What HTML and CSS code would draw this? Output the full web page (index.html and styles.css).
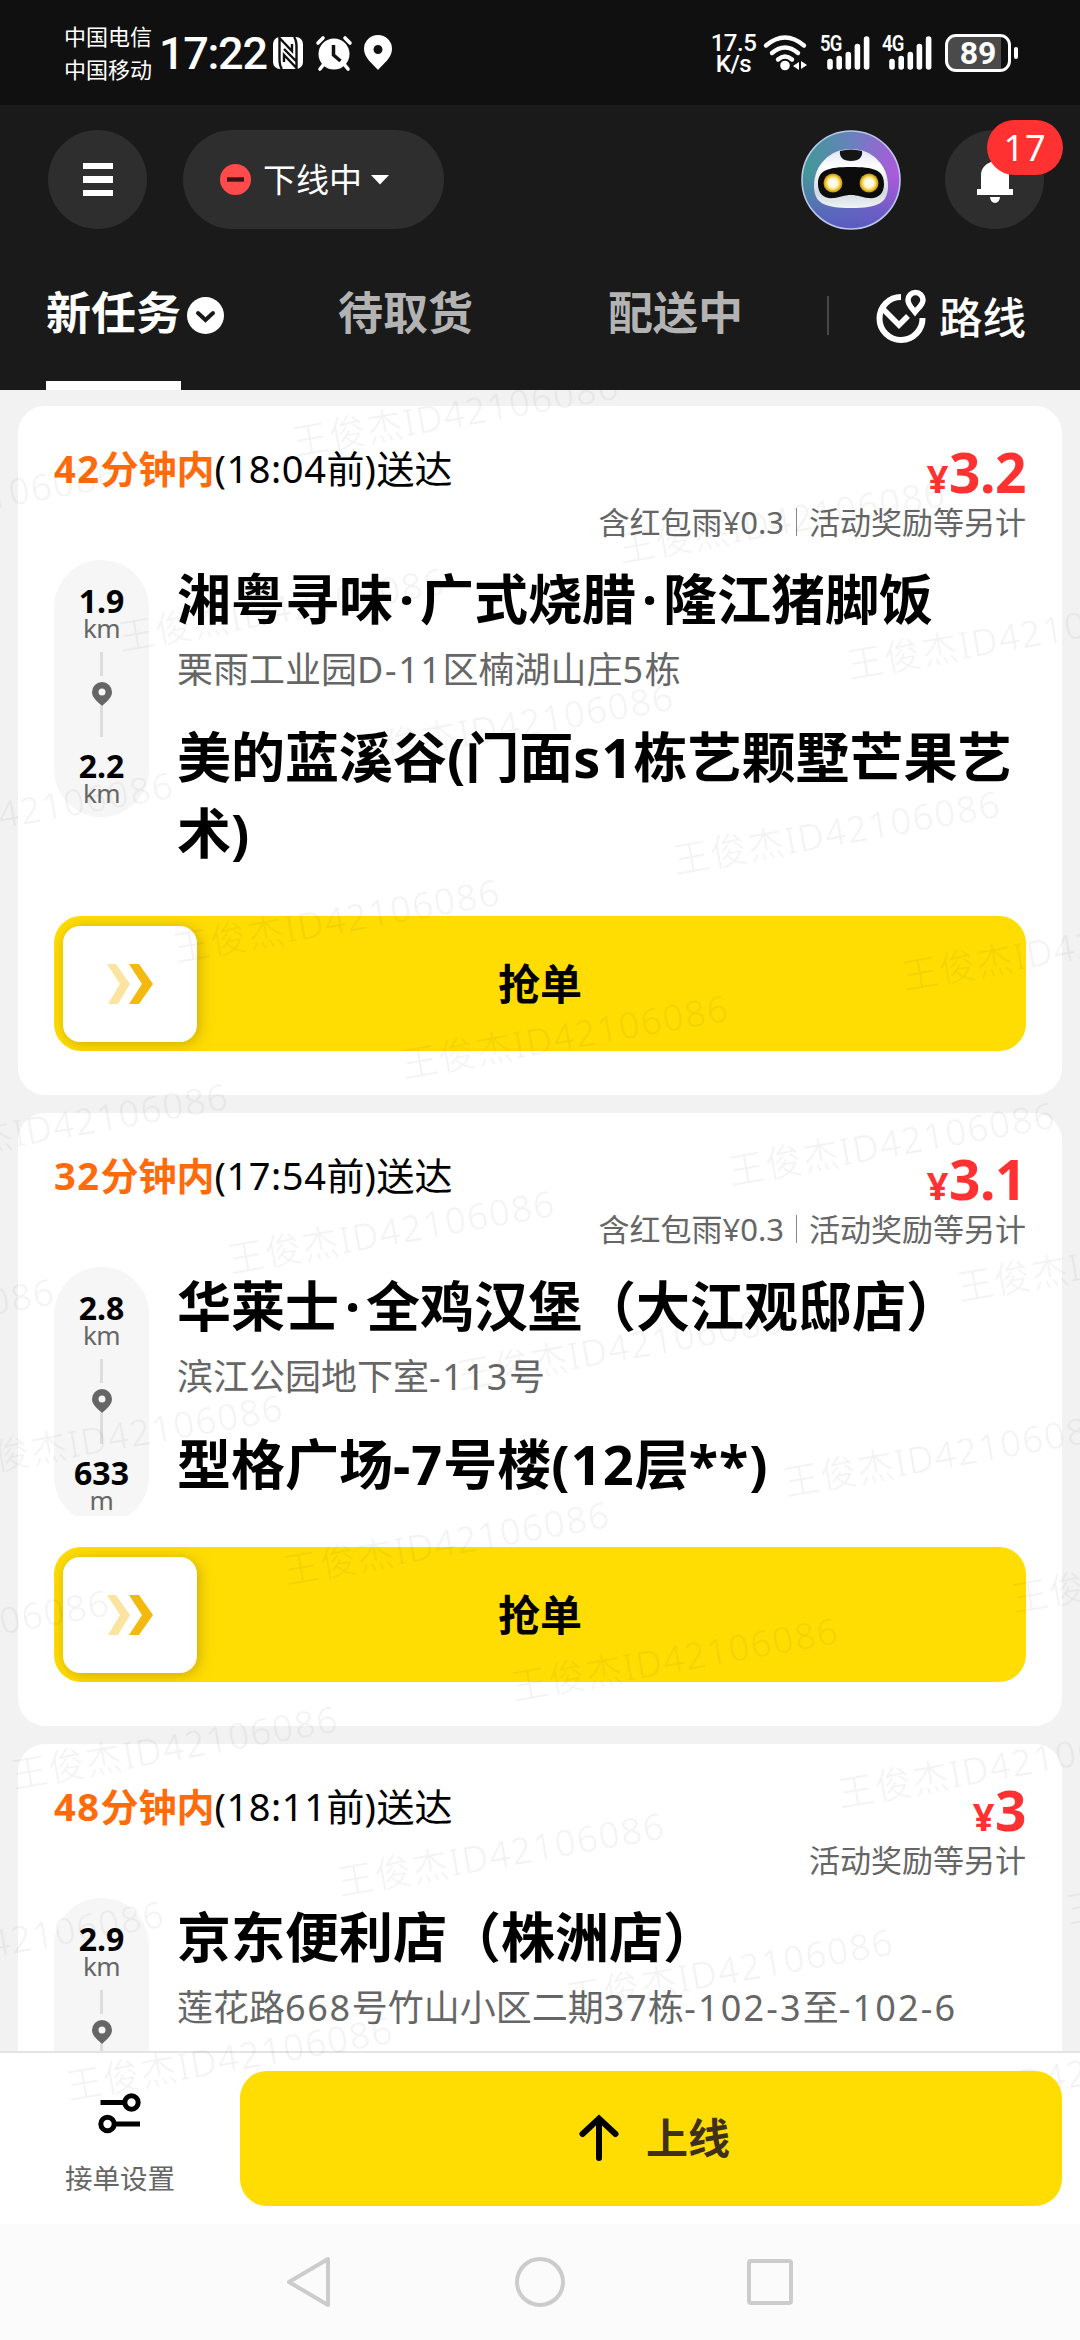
FILE: index.html
```html
<!DOCTYPE html>
<html lang="zh-CN">
<head>
<meta charset="utf-8">
<title>新任务</title>
<link rel="stylesheet" href="styles.css">
</head>
<body>
<svg class="defs" width="0" height="0">
  <symbol id="pin" viewBox="0 0 20 24"><path fill="#666" fill-rule="evenodd" d="M10 0a10 10 0 0 1 10 10c0 6-6 10-10 14C6 20 0 16 0 10A10 10 0 0 1 10 0Zm0 6.500a3.500 3.500 0 1 0 0 7 3.500 3.500 0 0 0 0-7Z"/></symbol>
  <symbol id="chevrons" viewBox="0 0 48 40"><path fill="#fbe3a0" d="M1 0h9l14 20-12 20H2l12-20Z"/><path fill="#f3b90f" d="M23 0h10l14 20-14 20H23l13-20Z"/></symbol>
  <symbol id="signal" viewBox="0 0 44 34"><g stroke="#fff" stroke-width="5.600" stroke-linecap="round"><path d="M3 25.500V31M12.200 22.500V31M21.300 18.500V31M30.400 10.500V31M39.600 3V31"/></g></symbol>
</svg>

<header class="status">
  <div class="carriers"><span>中国电信</span><span>中国移动</span></div>
  <div class="clock">17:22</div>
  <svg class="nfc" width="32" height="34" viewBox="0 0 32 34"><rect x="1" y="1" width="30" height="32" rx="7" fill="#fff"/><g stroke="#101010" stroke-width="2.400" fill="none"><path d="M7.500 1V23Q7.500 30 10 33M24.500 33V11Q24.500 4 22 1M7.500 2L20 15V8M24.500 32L12 19V26M12 13L24 25"/></g></svg>
  <svg class="alarm" width="38" height="36" viewBox="0 0 38 36"><circle cx="19" cy="19" r="15.500" fill="#fff"/><g stroke="#fff" stroke-width="3.600" stroke-linecap="round"><path d="M3 8l5-5M35 8l-5-5M9 29l-4 5M29 29l4 5"/></g><path d="M18.500 10v10l7 6" stroke="#101010" stroke-width="3.500" fill="none"/></svg>
  <svg class="loc" width="28" height="35" viewBox="0 0 28 35"><path fill="#fff" fill-rule="evenodd" d="M14 0a14 14 0 0 1 14 14c0 9-9 15-14 21C9 29 0 23 0 14A14 14 0 0 1 14 0Zm0 10a4.500 4.500 0 1 0 0 9 4.500 4.500 0 0 0 0-9Z"/></svg>
  <div class="status-right">
    <div class="speed"><span>17.5</span><span>K/s</span></div>
    <svg class="wifi" width="46" height="36" viewBox="0 0 46 36"><g fill="none" stroke="#fff" stroke-width="4.400" stroke-linecap="round"><path d="M3 10.500Q22 -5.500 41 10.500M9 18Q22 7 35 18M15 24.500Q22 18.500 29 24.500"/></g><circle cx="22" cy="30.500" r="4.800" fill="#fff"/><path d="M36 27v8l-6-4ZM38 26v8l6-4Z" fill="#fff"/></svg>
    <div class="cell"><span>5G</span><svg width="44" height="34"><use href="#signal"/></svg></div>
    <div class="cell cell-2"><span>4G</span><svg width="44" height="34"><use href="#signal"/></svg></div>
    <div class="battery"><span>89</span></div>
  </div>
</header>

<div class="top">
  <div class="tools">
    <div class="round"><div class="menu"><i></i><i></i><i></i></div></div>
    <div class="state">
      <svg width="31" height="31" viewBox="0 0 31 31"><circle cx="15.500" cy="15.500" r="15.500" fill="#ff4b4b"/><path d="M7 15.500h17" stroke="#3c1414" stroke-width="4.400"/></svg>
      <span>下线中</span>
      <svg width="18" height="10" viewBox="0 0 18 10"><path d="M0 0h18L9 9.500Z" fill="#fff"/></svg>
    </div>
    <svg class="robot" width="100" height="100" viewBox="0 0 100 100">
      <defs>
        <linearGradient id="ring" x1="0" y1=".45" x2="1" y2=".55"><stop offset="0" stop-color="#3f9a94"/><stop offset=".5" stop-color="#6c7fc0"/><stop offset="1" stop-color="#b455dc"/></linearGradient>
        <linearGradient id="low" x1="0" y1="0" x2="0" y2="1"><stop offset=".45" stop-color="#5a5ac0" stop-opacity="0"/><stop offset="1" stop-color="#5a5ac0"/></linearGradient>
        <linearGradient id="head" x1="0" y1="0" x2="0" y2="1"><stop offset="0" stop-color="#dfe3f3"/><stop offset=".3" stop-color="#fff"/><stop offset=".75" stop-color="#d2d8e0"/><stop offset="1" stop-color="#f0f6f6"/></linearGradient>
        <radialGradient id="eye"><stop offset="0" stop-color="#fff"/><stop offset=".5" stop-color="#fff6cf"/><stop offset=".75" stop-color="#f5cb35"/><stop offset="1" stop-color="#b98a10"/></radialGradient>
      </defs>
      <circle cx="50" cy="50" r="49" fill="url(#ring)"/><circle cx="50" cy="50" r="49" fill="url(#low)" stroke="#b9c7ea" stroke-width="1.600"/>
      <path d="M50 19C71 19 87 35 87 56c0 17-10 22-37 22S13 73 13 56C13 35 29 19 50 19Z" fill="url(#head)"/>
      <path d="M39 21q11-3 22 0c1 6-3 10-11 10s-12-4-11-10Z" fill="#151515"/>
      <path d="M17 54C17 40 27 37 50 37s33 3 33 17c0 10-6 15-16 14-6-.5-10-3-17-3s-11 2.500-17 3c-10 1-16-4-16-14Z" fill="#0c0c0c"/>
      <circle cx="32" cy="53" r="9.500" fill="url(#eye)"/><circle cx="68" cy="53" r="9.500" fill="url(#eye)"/>
    </svg>
    <div class="round bell">
      <svg width="38" height="46" viewBox="0 0 38 46"><path fill="#fff" d="M15 4a4 4 0 0 1 8 0c6 2 10 7 10 13v14h4v6H1v-6h4V17C5 11 9 6 15 4ZM14 39h10a5 6 0 0 1-10 0Z"/></svg>
      <span class="badge">17</span>
    </div>
  </div>
  <nav class="tabs">
    <div class="tab active"><span>新任务</span><svg width="37" height="37" viewBox="0 0 37 37"><circle cx="18.500" cy="18.500" r="18.500" fill="#fff"/><path d="M11 16l7.500 7 7.500-7" fill="none" stroke="#1a1a1a" stroke-width="4" stroke-linecap="round"/></svg></div>
    <div class="tab">待取货</div>
    <div class="tab">配送中</div>
    <div class="route">
      <svg width="50" height="54" viewBox="0 0 50 54"><g fill="none" stroke="#fff"><path d="M24 8A21.500 21.500 0 1 0 45.500 29" stroke-width="6"/><path d="M6 20l16 16 9-9" stroke-width="5.500"/><path d="M38 23c-3-4-7-7-7-12a7.500 7.500 0 0 1 15 0c0 5-5 8-8 12Z" stroke-width="5.500"/></g></svg>
      <span>路线</span>
    </div>
  </nav>
</div>

<main class="list">
  <article class="card">
    <div class="head">
      <div class="due"><b>42</b><strong>分钟内</strong><span>(18:04</span>前<span>)</span>送达</div>
      <div class="pay"><div class="price"><small>¥</small>3.2</div><div class="note"><span>含红包雨¥0.3</span><i></i><span>活动奖励等另计</span></div></div>
    </div>
    <div class="body">
      <div class="dist"><b>1.9</b><em>km</em><i class="l1"></i><svg width="20" height="24"><use href="#pin"/></svg><i class="l2"></i><b class="second">2.2</b><em>km</em></div>
      <div class="places">
        <h2>湘粤寻味<span class="dot">·</span>广式烧腊<span class="dot">·</span>隆江猪脚饭</h2>
        <p>栗雨工业园<span class="lat">D-11</span>区楠湖山庄<span class="lat">5</span>栋</p>
        <h2>美的蓝溪谷(门面<span class="lat">s1</span>栋艺颗墅芒果艺术)</h2>
      </div>
    </div>
    <div class="grab"><div class="thumb"><svg width="48" height="40"><use href="#chevrons"/></svg></div><span>抢单</span></div>
  </article>

  <article class="card">
    <div class="head">
      <div class="due"><b>32</b><strong>分钟内</strong><span>(17:54</span>前<span>)</span>送达</div>
      <div class="pay"><div class="price"><small>¥</small>3.1</div><div class="note"><span>含红包雨¥0.3</span><i></i><span>活动奖励等另计</span></div></div>
    </div>
    <div class="body">
      <div class="dist"><b>2.8</b><em>km</em><i class="l1"></i><svg width="20" height="24"><use href="#pin"/></svg><i class="l2"></i><b class="second">633</b><em>m</em></div>
      <div class="places">
        <h2>华莱士<span class="dot">·</span>全鸡汉堡（大江观邸店）</h2>
        <p>滨江公园地下室<span class="lat">-113</span>号</p>
        <h2>型格广场<span class="lat">-7</span>号楼<span class="lat">(12</span>层<span class="lat">**)</span></h2>
      </div>
    </div>
    <div class="grab"><div class="thumb"><svg width="48" height="40"><use href="#chevrons"/></svg></div><span>抢单</span></div>
  </article>

  <article class="card">
    <div class="head">
      <div class="due"><b>48</b><strong>分钟内</strong><span>(18:11</span>前<span>)</span>送达</div>
      <div class="pay"><div class="price"><small>¥</small>3</div><div class="note"><span>活动奖励等另计</span></div></div>
    </div>
    <div class="body">
      <div class="dist"><b>2.9</b><em>km</em><i class="l1"></i><svg width="20" height="24"><use href="#pin"/></svg><i class="l2"></i></div>
      <div class="places">
        <h2>京东便利店（株洲店）</h2>
        <p>莲花路<span class="lat">668</span>号竹山小区二期<span class="lat">37</span>栋<span class="lat wide">-102-3</span>至<span class="lat wide">-102-6</span></p>
      </div>
    </div>
  </article>
</main>

<footer class="actions">
  <div class="settings">
    <svg width="44" height="40" viewBox="0 0 44 40"><g fill="none" stroke="#000" stroke-width="5"><path d="M2.500 9.500H26M18 31h24"/><circle cx="33.500" cy="9.500" r="6.700"/><circle cx="9.500" cy="31" r="6.700"/></g></svg>
    <span>接单设置</span>
  </div>
  <div class="online">
    <svg width="40" height="46" viewBox="0 0 40 46"><path d="M20 44V5M3.500 20L20 4.500 36.500 20" fill="none" stroke="#000" stroke-width="6" stroke-linecap="round"/></svg>
    <span>上线</span>
  </div>
</footer>

<div class="sysnav">
  <svg width="46" height="52" viewBox="0 0 46 52"><path d="M41 3v46L2 26Z" fill="none" stroke="#ccc" stroke-width="4" stroke-linejoin="round"/></svg>
  <svg width="52" height="52" viewBox="0 0 52 52"><circle cx="26" cy="26" r="23" fill="none" stroke="#ccc" stroke-width="4"/></svg>
  <svg width="46" height="46" viewBox="0 0 46 46"><rect x="2" y="2" width="42" height="42" rx="2" fill="none" stroke="#ccc" stroke-width="4"/></svg>
</div>

<svg class="watermark" width="1080" height="1740" viewBox="0 390 1080 1740">
  <defs>
    <pattern id="wm" x="0" y="-20" width="508" height="316" patternUnits="userSpaceOnUse" patternTransform="rotate(-10)">
      <g class="wm-text">
        <text x="6" y="50" textLength="330">王俊杰ID42106086</text>
        <text x="211" y="204" textLength="330">王俊杰ID42106086</text>
        <text x="-297" y="204" textLength="330">王俊杰ID42106086</text>
      </g>
    </pattern>
  </defs>
  <rect x="0" y="390" width="1080" height="1740" fill="url(#wm)"/>
</svg>
</body>
</html>
```
FILE: styles.css
```css
* { box-sizing: border-box; }
body {
  margin: 0;
  width: 1080px;
  height: 2340px;
  overflow: hidden;
  position: relative;
  display: flex;
  flex-direction: column;
  background: #f2f2f2;
  font-family: "Noto Sans", "Noto Sans CJK SC", sans-serif;
  color: #000;
}
svg { display: block; flex: none; overflow: visible; }
.defs { position: absolute; }
i, em { font-style: normal; }
h2, p { margin: 0; }

/* system status bar */
.status {
  height: 105px;
  flex: none;
  background: #101010;
  color: #fff;
  display: flex;
  align-items: center;
  padding: 0 62px 0 64px;
}
.carriers { display: flex; flex-direction: column; font-size: 22px; line-height: 33px; width: 95px; white-space: nowrap; }
.clock { font-family: Roboto, sans-serif; font-size: 45px; font-weight: 500; letter-spacing: -1.300px; line-height: 60px; width: 113px; padding-top: 3px; }
.nfc { margin-right: 11px; }
.alarm { margin-right: 11px; }
.status-right { margin-left: auto; display: flex; align-items: center; }
.speed { width: 51px; display: flex; flex-direction: column; align-items: center; font-family: Roboto, sans-serif; font-size: 24px; line-height: 21px; font-weight: 500; letter-spacing: -.5px; padding: 3px 8px 0 0; white-space: nowrap; }
.wifi { margin-right: 18px; }
.cell { position: relative; width: 44px; margin-right: 18px; }
.cell span { position: absolute; left: -7px; top: -4px; font-family: Roboto, sans-serif; font-size: 22px; line-height: 24px; font-weight: 600; letter-spacing: -1px; transform: scaleX(.84); transform-origin: 0 0; }
.cell-2 { margin-right: 12px; }
.battery {
  position: relative;
  width: 66px;
  height: 38px;
  border: 3px solid #fff;
  border-radius: 11px;
  background: linear-gradient(90deg, #4a4a4a 89%, #101010 89%);
  margin-right: 7px;
  display: flex;
  align-items: center;
  justify-content: center;
  font-family: Roboto, sans-serif;
  font-size: 32px;
  line-height: 34px;
  font-weight: 700;
}
.battery::after { content: ""; position: absolute; right: -10px; top: 10px; width: 4px; height: 12px; border-radius: 2px; background: #fff; }

/* app header */
.top { height: 285px; flex: none; background: #1a1a1a; color: #fff; }
.tools { display: flex; padding: 25px 36px 0 48px; height: 125px; }
.round { width: 99px; height: 99px; border-radius: 50%; background: #2e2e2e; display: flex; align-items: center; justify-content: center; }
.menu { width: 30px; display: grid; gap: 7px; }
.menu i { height: 6.500px; background: #fff; }
.state { margin-left: 36px; width: 261px; height: 99px; border-radius: 50px; background: #2e2e2e; display: flex; align-items: center; padding-left: 37px; font-size: 33px; line-height: 48px; }
.state span { margin: 0 9px 0 12px; }
.robot { margin-left: auto; }
.bell { position: relative; margin-left: 44px; padding-top: 2px; }
.badge { position: absolute; left: 42px; top: -10px; width: 76px; height: 55px; border-radius: 28px; background: #ff3131; font-size: 36px; line-height: 56px; text-align: center; letter-spacing: 1px; }
.tabs { height: 160px; display: flex; padding-left: 46px; font-size: 45px; line-height: 60px; font-weight: 700; color: #b3b3b3; }
.tab { padding-top: 53px; width: 270px; }
.tab + .tab { padding-left: 22px; }
.tab.active { color: #fff; display: flex; position: relative; }
.tab.active svg { margin: 14px 0 0 6px; }
.tab.active::after { content: ""; position: absolute; left: 0; bottom: 0; width: 135px; height: 9px; background: #fff; }
.route { display: flex; margin-left: -29px; margin-top: 66px; height: 39px; border-left: 2px solid #484848; padding-left: 48px; align-items: center; color: #fff; font-size: 43.500px; font-weight: 500; white-space: nowrap; }
.route span { margin-left: 12px; margin-top: 3px; }

/* orders */
.list { flex: none; height: 1661px; overflow: hidden; display: flex; flex-direction: column; gap: 18px; padding: 16px 18px 0; }
.card { flex: none; background: #fff; border-radius: 27px; padding: 0 36px 44px; }
.head { height: 154px; display: flex; justify-content: space-between; }
.due { padding-top: 37px; font-size: 38px; line-height: 50px; white-space: nowrap; }
.due b, .due strong { color: #ff6a0a; font-weight: 700; }
.due b { letter-spacing: .04em; }
.due span { letter-spacing: .015em; }
.pay { padding-top: 33px; }
.price { color: #ff3131; font-weight: 700; font-size: 55px; line-height: 66px; text-align: right; height: 67px; letter-spacing: -.5px; }
.price small { font-size: 38px; margin-right: 1px; }
.note { display: flex; align-items: center; justify-content: flex-end; font-size: 31px; line-height: 32px; color: #666; white-space: nowrap; }
.note i { width: 1px; height: 28px; background: #888; margin: 0 12px; }
.body { display: flex; margin-bottom: 31px; min-height: 249px; overflow: hidden; }
.dist { flex: none; width: 95px; height: 257px; margin-bottom: -8px; border-radius: 48px; background: #f6f6f6; display: flex; flex-direction: column; align-items: center; padding-top: 24px; }
.dist b { font-size: 32px; line-height: 33px; }
.dist em { font-size: 26px; line-height: 22px; color: #666; font-weight: 400; letter-spacing: -.5px; }
.dist .l1 { width: 3px; height: 24px; background: #ddd; margin-top: 13px; }
.dist svg { margin-top: 6px; }
.dist .l2 { width: 3px; height: 31px; background: #ddd; }
.dist .second { margin-top: 12px; }
.places { width: 847px; margin-left: 28px; padding: 1px 0 14px; flex: none; }
.places h2 { font-size: 54px; line-height: 76px; font-weight: 700; }
.places p { font-size: 36px; line-height: 65px; margin-bottom: 17px; color: #666; white-space: nowrap; }
.dot { display: inline-block; width: 27px; text-align: center; }
.lat { letter-spacing: .045em; }
h2 .lat { letter-spacing: .02em; }
.wide { letter-spacing: .06em; }
.grab { position: relative; height: 135px; border-radius: 27px; background: #ffdd03; display: flex; align-items: center; justify-content: center; font-size: 42px; font-weight: 700; line-height: 60px; overflow: hidden; }
.thumb { position: absolute; left: 9px; top: 10px; width: 134px; height: 116px; border-radius: 17px; background: #fff; box-shadow: 2px 2px 14px rgba(160, 120, 0, .5); display: flex; align-items: center; justify-content: center; }

/* bottom bar */
.actions { position: relative; flex: none; height: 173px; background: #fff; border-top: 2px solid #e4e4e4; display: flex; padding: 18px 18px 0 0; }
.settings { width: 240px; display: flex; flex-direction: column; align-items: center; padding-top: 22px; font-size: 27.500px; line-height: 40px; color: #666; }
.settings span { margin-top: 26px; }
.online { position: relative; z-index: 2; flex: 1; height: 135px; border-radius: 27px; background: #ffdd03; display: flex; align-items: center; justify-content: center; font-size: 42px; font-weight: 700; color: #40301a; line-height: 60px; padding-left: 7px; }
.online svg { margin-top: -3px; }
.online span { margin: -2px 0 0 27px; }

.sysnav { flex: 1; background: #fbfbfb; display: flex; align-items: center; justify-content: center; gap: 181px; }

.watermark { position: absolute; left: 0; top: 390px; overflow: hidden; pointer-events: none; z-index: 1; }
.wm-text { font-size: 36px; font-weight: 300; fill: rgba(0, 0, 0, .05); }
```
